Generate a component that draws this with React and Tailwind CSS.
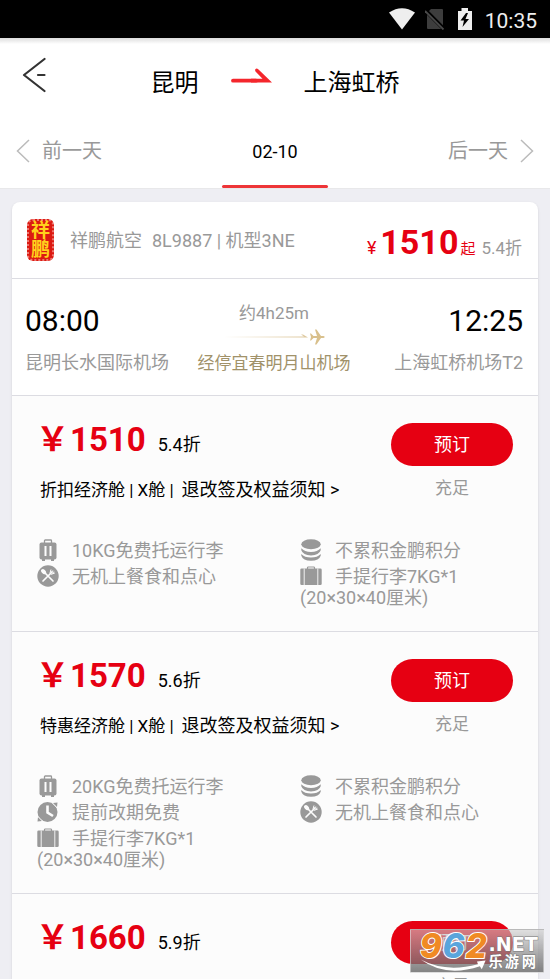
const fares = [
  {
    price: 1510,
    discount: "5.4折",
    cabin: "折扣经济舱 | X舱 |",
    left: [
      { icon: "trunk", text: "10KG免费托运行李" },
      { icon: "meal", text: "无机上餐食和点心" },
    ],
    right: [
      { icon: "coins", text: "不累积金鹏积分" },
      { icon: "suitcase", text: "手提行李7KG*1", note: "(20×30×40厘米)" },
    ],
  },
  {
    price: 1570,
    discount: "5.6折",
    cabin: "特惠经济舱 | X舱 |",
    left: [
      { icon: "trunk", text: "20KG免费托运行李" },
      { icon: "clock", text: "提前改期免费" },
      { icon: "suitcase", text: "手提行李7KG*1", note: "(20×30×40厘米)" },
    ],
    right: [
      { icon: "coins", text: "不累积金鹏积分" },
      { icon: "meal", text: "无机上餐食和点心" },
    ],
  },
  {
    price: 1660,
    discount: "5.9折",
  },
];

const icons = {
  trunk: (
    <>
      <path d="M7.5 4V1.8Q7.5 1 8.300 1H13.700Q14.500 1 14.500 1.800V4" fill="none" stroke="currentColor" strokeWidth="1.300" />
      <rect x="2.500" y="3.500" width="17" height="17" rx="2" fill="currentColor" />
      <path d="M5 20h3v2H5zM14 20h3v2h-3z" fill="currentColor" />
      <path d="M8.500 7v10M13.500 7v10" stroke="#fcfcfc" strokeWidth="2" />
    </>
  ),
  meal: (
    <>
      <circle cx="11" cy="11" r="10.700" fill="currentColor" />
      <path d="M7 7l9 9M15 7l-9 9" stroke="#fcfcfc" strokeWidth="1.700" strokeLinecap="round" />
      <ellipse cx="6.600" cy="6.600" rx="2" ry="2.900" transform="rotate(-45 6.600 6.600)" fill="#fcfcfc" />
      <path d="M14 4.500l-1 3.500 1.200 1.300 3.600-1.300M15.800 5.500l-1.500 2M17.200 6.700l-2 1.600" fill="none" stroke="#fcfcfc" strokeWidth="1" />
    </>
  ),
  coins: (
    <g fill="currentColor">
      <ellipse cx="11" cy="5.300" rx="9.700" ry="5" />
      <path d="M1.300 9.300Q4.500 13 11 13T20.700 9.300V11.300Q19 16.400 11 16.400T1.300 11.300Z" />
      <path d="M1.300 15Q4.500 18.500 11 18.500T20.700 15V16.800Q19 21.800 11 21.800T1.300 16.800Z" />
    </g>
  ),
  suitcase: (
    <>
      <path d="M7.500 4V2.800Q7.500 2 8.300 2H13.700Q14.500 2 14.500 2.800V4" fill="none" stroke="currentColor" strokeWidth="1.200" />
      <rect x="0.300" y="3.500" width="21.400" height="16.500" rx="1.300" fill="currentColor" />
      <path d="M4.200 3.500V20M17.800 3.500V20" stroke="#fcfcfc" strokeWidth="0.900" />
    </>
  ),
  clock: (
    <>
      <circle cx="10.500" cy="11" r="10" fill="currentColor" />
      <path d="M16 2L20.500 1.500 20 6ZM5 20L0.500 20.500 1 16Z" fill="currentColor" />
      <path d="M15.500 2.500l4.500 4.500M1 15.500l4.500 4.500" stroke="#fcfcfc" strokeWidth="0.700" />
      <path d="M10.500 4.500V11.500L16 15" fill="none" stroke="#fcfcfc" strokeWidth="2.600" />
    </>
  ),
};

const Feature = ({ icon, text, note }) => (
  <li>
    <div className="flex h-[26px] items-center gap-[13px]">
      <svg className="h-[22px] w-[22px] shrink-0" viewBox="0 0 22 22">
        {icons[icon]}
      </svg>
      <span className="whitespace-nowrap">{text}</span>
    </div>
    {note && <p className="leading-[18px]">{note}</p>}
  </li>
);

const Fare = ({ fare }) => (
  <section className="border-t border-[#dcdce2] bg-[#fcfcfc] pt-[27px] pb-6">
    <div className="flex justify-between pr-[25px] pl-6">
      <div>
        <p className="flex h-[34px] items-baseline leading-[34px]">
          <span className="text-[33px] font-bold text-[#e60012]">￥</span>
          <span className="ml-px text-[33px] font-bold text-[#e60012]">
            {fare.price}
          </span>
          <span className="ml-3 text-[18px]">{fare.discount}</span>
        </p>
        {fare.cabin && (
          <p className="mt-[21px] flex h-6 items-center gap-2 pl-1 leading-6 whitespace-nowrap">
            <span className="text-[17px]">{fare.cabin}</span>
            <a href="#rules" className="text-[18px]">
              退改签及权益须知 &gt;
            </a>
          </p>
        )}
      </div>
      <div className="text-center">
        <button
          type="button"
          className="block h-[43px] w-[122px] rounded-full bg-[#e60012] text-[18px] text-white"
        >
          预订
        </button>
        <p className="mt-[10px] text-[17px] leading-6 text-[#999]">充足</p>
      </div>
    </div>
    {fare.left && (
      <div className="mt-[35px] grid grid-cols-2 text-[18px] text-[#999]">
        <ul className="pl-[25px]">
          {fare.left.map((item) => (
            <Feature key={item.text} {...item} />
          ))}
        </ul>
        <ul className="pl-[25px]">
          {fare.right.map((item) => (
            <Feature key={item.text} {...item} />
          ))}
        </ul>
      </div>
    )}
  </section>
);

const StatusBar = () => (
  <div className="flex h-[38px] items-center justify-end bg-black pr-[13px] text-[#eee]">
    <svg className="h-[22px] w-[26px]" viewBox="0 0 26 22" fill="currentColor">
      <path d="M0 4.500Q13-4 26 4.500L13 21.500Z" />
    </svg>
    <svg className="ml-[10px] h-[22px] w-5" viewBox="0 0 20 22">
      <path d="M6 1H17Q18 1 18 2V21H3Q2 21 2 20V5Z" fill="#3d3d3d" />
      <path d="M0 2L19 21" stroke="#000" strokeWidth="4" />
      <path d="M0 3L18.500 21.500" stroke="#4a4a4a" strokeWidth="1.800" />
    </svg>
    <svg className="ml-3 h-[22px] w-4" viewBox="0 0 16 22">
      <path d="M1 3H4.500V0H11V3H15V22H1Z" fill="currentColor" />
      <path d="M9 5L3.500 12.500H7L5.500 19L12 11H8.500L11 5Z" fill="#000" />
    </svg>
    <span className="ml-3 pt-1 text-[21px] leading-6">10:35</span>
  </div>
);

const Watermark = () => (
  <div className="absolute right-1.5 bottom-1.5 h-11 w-[134px] border border-[#dddddd]/60 bg-gradient-to-b from-[#cccccc]/60 to-[#666666]/80">
    <svg className="h-full w-full" viewBox="0 0 134 44">
      <g
        fontFamily="Inter, sans-serif"
        fontWeight="800"
        fontStyle="italic"
        fontSize="35"
        stroke="#fff"
        strokeWidth="2"
        paintOrder="stroke"
      >
        <text x="7" y="29" fill="#f08a24">9</text>
        <text x="31" y="29" fill="#5aa5dc">6</text>
        <text x="55" y="29" fill="#f08a24">2</text>
      </g>
      <path d="M8 31Q34 45 68 36L67 33 76 32 72 41 70 38Q34 50 8 31Z" fill="#fff" />
      <g fill="#fff" stroke="#777" strokeWidth="1" paintOrder="stroke" fontWeight="700">
        <text x="79" y="22" fontFamily="DejaVu Sans, sans-serif" fontSize="20">
          .NET
        </text>
        <g fontFamily="Noto Sans CJK SC, sans-serif" fontSize="15">
          <text x="79" y="39">乐</text>
          <text x="96" y="39">游</text>
          <text x="114" y="39">网</text>
        </g>
      </g>
    </svg>
  </div>
);

const App = () => {
  return (
    <div className="relative h-screen overflow-hidden bg-[#eeeef3] font-[Roboto,'Noto_Sans_CJK_SC',sans-serif] text-black">
      <StatusBar />
      <header className="border-b border-[#e8e8ea] bg-white">
        <div className="h-1.5 bg-gradient-to-b from-[#dddddd] to-white" />
        <div className="grid h-[70px] grid-cols-[46px_1fr_46px] items-center">
          <button type="button" aria-label="返回" className="mb-2 justify-self-end">
            <svg className="h-9 w-6" viewBox="0 0 24 36" fill="none" stroke="#333" strokeWidth="2.200" strokeLinecap="round" strokeLinejoin="round">
              <path d="M22.500 2L2 18 22.500 34M16 18H22.500" />
            </svg>
          </button>
          <h1 className="flex items-center justify-center gap-8 text-[24px]">
            <span className="pt-2">昆明</span>
            <svg className="mb-1.5 h-4 w-[41px]" viewBox="0 0 41 16">
              <path d="M2 12.700H25" stroke="#f4262c" strokeWidth="3.800" strokeLinecap="round" />
              <path d="M20 10.800H31.500L24.500 3.500Q23.500 1.500 25 0.700Q26 0.200 27.500 1.500L41 14.600H20Z" fill="#f4262c" />
            </svg>
            <span className="pt-2">上海虹桥</span>
          </h1>
        </div>
        <nav className="grid h-[74px] grid-cols-[1fr_106px_1fr] items-stretch text-[#999]">
          <a href="#prev" className="flex items-center gap-3 pl-4 text-[20px]">
            <svg className="h-6 w-[14px]" viewBox="0 0 14 24" fill="none" stroke="#bbb" strokeWidth="1.500">
              <path d="M13 1L1.500 12 13 23" />
            </svg>
            前一天
          </a>
          <div className="relative flex items-center justify-center text-[18px] text-black">
            02-10
            <span className="absolute inset-x-0 bottom-0 h-[3px] rounded-full bg-[#ee3538]" />
          </div>
          <a href="#next" className="flex items-center justify-end gap-3 pr-4 text-[20px]">
            后一天
            <svg className="h-6 w-[14px]" viewBox="0 0 14 24" fill="none" stroke="#bbb" strokeWidth="1.500">
              <path d="M1 1L12.500 12 1 23" />
            </svg>
          </a>
        </nav>
      </header>

      <main className="mx-3 mt-[13px] overflow-hidden rounded-lg bg-white shadow">
        <div className="flex h-[76px] items-center justify-between pr-4 pl-[15px] text-[18px] whitespace-nowrap text-[#999]">
          <div className="flex items-center">
            <div className="flex h-[42px] w-[27px] flex-col items-center justify-center rounded-md border-2 border-dotted border-[#ee7770] bg-[#dc1a12] text-[19px] leading-[19px] font-bold text-[#ffd21c]">
              <span>祥</span>
              <span>鹏</span>
            </div>
            <span className="ml-4">祥鹏航空</span>
            <span className="ml-[10px]">8L9887 | 机型3NE</span>
          </div>
          <p className="flex items-baseline pt-[10px] leading-9 text-[#e60012]">
            <span>¥</span>
            <span className="ml-1 text-[34px] font-bold">1510</span>
            <span className="ml-0.5 text-[15px]">起</span>
            <span className="ml-1.5 text-[17px] text-[#999]">5.4折</span>
          </p>
        </div>

        <div className="grid h-[117px] grid-cols-[1fr_auto_1fr] border-t border-[#dcdce2] pt-6 pr-[15px] pl-[13px] text-[18px] whitespace-nowrap text-[#999]">
          <div>
            <p className="text-[30px] leading-9 text-black">08:00</p>
            <p className="mt-3 leading-6">昆明长水国际机场</p>
          </div>
          <div className="flex flex-col items-center text-[17px]">
            <p className="leading-5">约4h25m</p>
            <svg className="mt-1.5 h-4 w-[101px]" viewBox="0 0 101 16">
              <defs>
                <linearGradient id="route">
                  <stop offset="0" stopColor="#dcc69a" stopOpacity="0" />
                  <stop offset="1" stopColor="#dcc69a" />
                </linearGradient>
              </defs>
              <path d="M0 7.500H80L77 5.500H79L84 8.500H0Z" fill="url(#route)" />
              <path d="M87 4.500L89.500 7H93L91 0.500H92.500L97 7H99.500Q102 8 99.500 9H97L92.500 15.500H91L93 9H89.500L87 11.500H86L87 8 86 4.500Z" fill="#d9c08c" />
            </svg>
            <p className="mt-1.5 leading-6 text-[#a1926a]">经停宜春明月山机场</p>
          </div>
          <div className="text-right">
            <p className="text-[30px] leading-9 text-black">12:25</p>
            <p className="mt-3 leading-6">上海虹桥机场T2</p>
          </div>
        </div>

        {fares.map((fare) => (
          <Fare key={fare.price} fare={fare} />
        ))}
      </main>
      <Watermark />
    </div>
  );
};

export default App;
